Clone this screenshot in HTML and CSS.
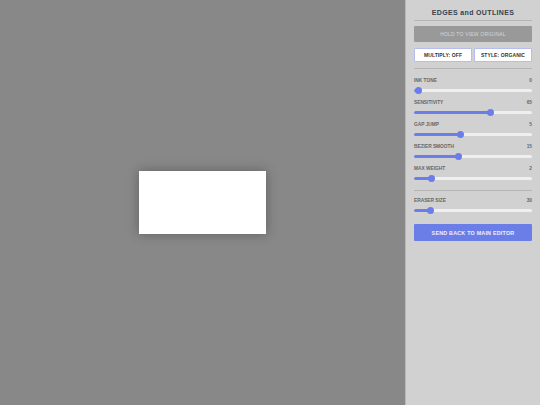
FILE: index.html
```html
<!DOCTYPE html>
<html lang="en">
<head>
<meta charset="utf-8">
<title>Edges and Outlines</title>
<link rel="stylesheet" href="styles.css">
</head>
<body>
<main class="stage">
  <div class="canvas"></div>
</main>
<aside class="panel">
  <h1 class="title">EDGES and OUTLINES</h1>
  <button class="btn-hold">HOLD TO VIEW ORIGINAL</button>
  <div class="toggles">
    <button class="btn-toggle">MULTIPLY: OFF</button>
    <button class="btn-toggle">STYLE: ORGANIC</button>
  </div>
  <div class="group">
    <div class="control"><div class="row"><span>INK TONE</span><span>0</span></div><div class="track"><div class="fill" style="width:4px"></div><div class="thumb"></div></div></div>
    <div class="control"><div class="row"><span>SENSITIVITY</span><span>65</span></div><div class="track"><div class="fill" style="width:76px"></div><div class="thumb"></div></div></div>
    <div class="control"><div class="row"><span>GAP JUMP</span><span>5</span></div><div class="track"><div class="fill" style="width:46px"></div><div class="thumb"></div></div></div>
    <div class="control"><div class="row"><span>BEZIER SMOOTH</span><span>15</span></div><div class="track"><div class="fill" style="width:44px"></div><div class="thumb"></div></div></div>
    <div class="control"><div class="row"><span>MAX WEIGHT</span><span>2</span></div><div class="track"><div class="fill" style="width:17px"></div><div class="thumb"></div></div></div>
  </div>
  <div class="group group-last">
    <div class="control"><div class="row"><span>ERASER SIZE</span><span>30</span></div><div class="track"><div class="fill" style="width:16px"></div><div class="thumb"></div></div></div>
  </div>
  <button class="btn-send">SEND BACK TO MAIN EDITOR</button>
</aside>
</body>
</html>
```

FILE: styles.css
```css
* { box-sizing: border-box; }
html, body { margin: 0; height: 100%; }
body {
  display: flex;
  width: 540px;
  height: 405px;
  overflow: hidden;
  font-family: "Liberation Sans", Arial, sans-serif;
  background: #888888;
}
.stage {
  flex: 1;
  display: flex;
  align-items: center;
  justify-content: center;
  background: #888888;
}
.canvas {
  width: 127px;
  height: 63px;
  background: #fff;
  box-shadow: 0 0 11px rgba(0, 0, 0, 0.3);
}
.panel {
  width: 135px;
  height: 405px;
  padding: 8px;
  background: #d1d1d1;
  border-left: 1px solid #b8b8b8;
  display: flex;
  flex-direction: column;
}
.title {
  margin: 0;
  padding: 1px 0 3px;
  height: 13px;
  font-size: 7px;
  line-height: 8px;
  font-weight: 700;
  letter-spacing: 0.35px;
  text-align: center;
  color: #39424e;
  border-bottom: 1px solid #b5b5b5;
}
button {
  font-family: inherit;
  font-weight: 700;
  padding: 0;
  cursor: pointer;
}
.btn-hold {
  margin-top: 5px;
  height: 16px;
  border: 0;
  border-radius: 1px;
  background: #999;
  color: #d6d6d6;
  font-size: 5px;
  font-weight: 400;
  letter-spacing: 0.2px;
}
.toggles {
  display: flex;
  gap: 2px;
  margin-top: 6px;
}
.btn-toggle {
  flex: 1;
  height: 14px;
  background: #fff;
  border: 1px solid #b4bdee;
  border-radius: 1px;
  color: #333;
  font-size: 5px;
  letter-spacing: 0.1px;
}
.group {
  margin-top: 6px;
  padding-top: 7px;
  border-top: 1px solid #b5b5b5;
}
.group-last { margin-top: 4px; padding-top: 5px; }
.control { height: 22px; }
.row {
  display: flex;
  justify-content: space-between;
  height: 9px;
  padding-top: 2px;
  font-size: 4.8px;
  line-height: 6px;
  font-weight: 700;
  color: #666;
}
.track {
  display: flex;
  align-items: center;
  height: 3px;
  margin-top: 3.5px;
  background: #efefef;
  border-radius: 2px;
}
.fill {
  height: 3px;
  background: #6b7ee8;
  border-radius: 2px;
  flex: none;
}
.thumb {
  flex: none;
  width: 7px;
  height: 7px;
  margin-left: -3.5px;
  border-radius: 50%;
  background: #6b7ee8;
}
.btn-send {
  margin-top: 6px;
  height: 17px;
  border: 0;
  border-radius: 1px;
  background: #6b7ee8;
  color: #eef0fb;
  font-size: 5.4px;
  letter-spacing: 0.2px;
}
```
